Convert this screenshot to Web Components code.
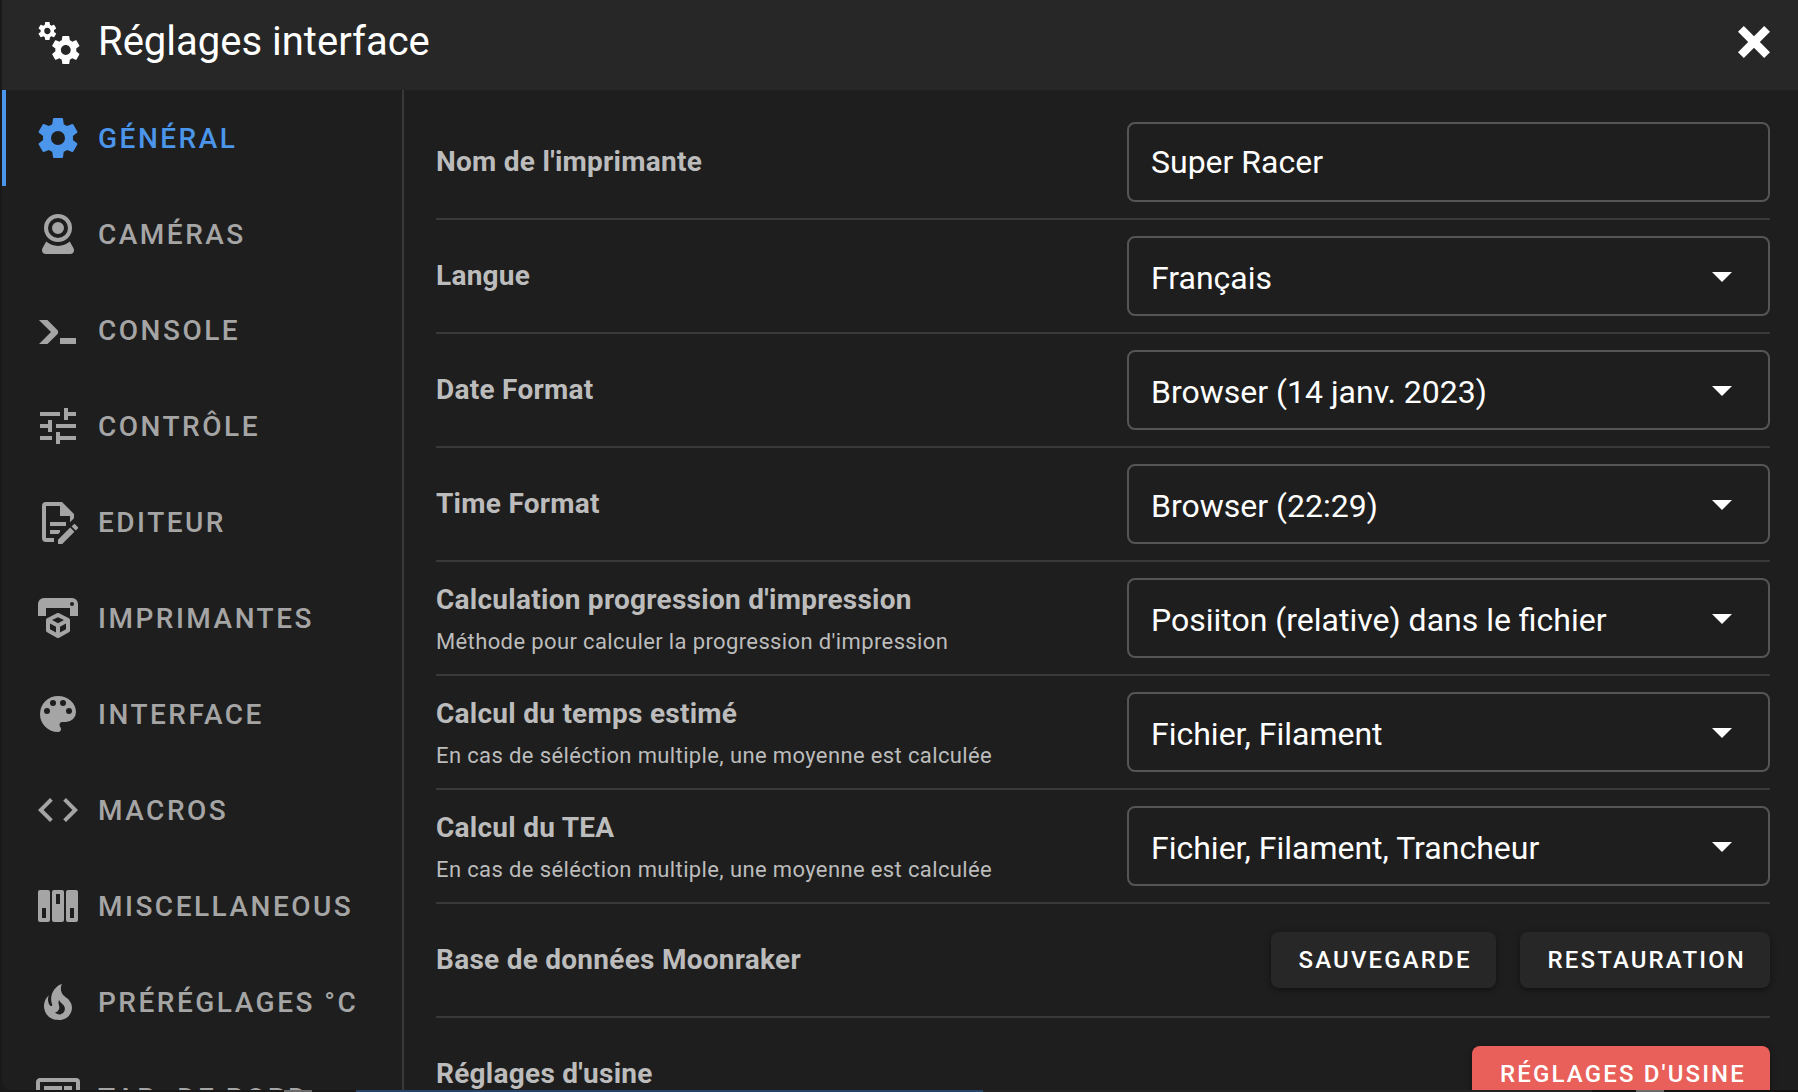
<!DOCTYPE html>
<html lang="fr">
<head>
<meta charset="utf-8">
<meta name="viewport" content="width=device-width, initial-scale=1">
<title>Réglages interface</title>
<style>
  html, body { margin: 0; height: 100%; overflow: hidden; }
  body {
    --surface: #1e1e1e;
    --raised: #272727;
    --line: #393939;
    --outline: #555;
    --primary: #4b95eb;
    --error: #e95f5a;
    --muted: #bcbcbc;
    --inactive: #a5a5a5;
    background: #191919;
    color: #fff;
    font-family: Roboto, "Liberation Sans", sans-serif;
  }
</style>
</head>
<body>
<settings-dialog heading="Réglages interface">
  <nav-tab slot="nav" icon="cog" active>Général</nav-tab>
  <nav-tab slot="nav" icon="webcam">Caméras</nav-tab>
  <nav-tab slot="nav" icon="console">Console</nav-tab>
  <nav-tab slot="nav" icon="tune">Contrôle</nav-tab>
  <nav-tab slot="nav" icon="edit">Editeur</nav-tab>
  <nav-tab slot="nav" icon="printer">Imprimantes</nav-tab>
  <nav-tab slot="nav" icon="palette">Interface</nav-tab>
  <nav-tab slot="nav" icon="code">Macros</nav-tab>
  <nav-tab slot="nav" icon="dip">Miscellaneous</nav-tab>
  <nav-tab slot="nav" icon="fire">Préréglages °C</nav-tab>
  <nav-tab slot="nav" icon="dashboard">Tab. de bord</nav-tab>

  <setting-row kind="text" label="Nom de l'imprimante" value="Super Racer"></setting-row>
  <setting-row kind="select" label="Langue" value="Français"></setting-row>
  <setting-row kind="select" label="Date Format" value="Browser (14 janv. 2023)"></setting-row>
  <setting-row kind="select" label="Time Format" value="Browser (22:29)"></setting-row>
  <setting-row kind="select" label="Calculation progression d'impression" hint="Méthode pour calculer la progression d'impression" value="Posiiton (relative) dans le fichier"></setting-row>
  <setting-row kind="select" label="Calcul du temps estimé" hint="En cas de séléction multiple, une moyenne est calculée" value="Fichier, Filament"></setting-row>
  <setting-row kind="select" label="Calcul du TEA" hint="En cas de séléction multiple, une moyenne est calculée" value="Fichier, Filament, Trancheur"></setting-row>
  <setting-row label="Base de données Moonraker">
    <action-button>Sauvegarde</action-button>
    <action-button>Restauration</action-button>
  </setting-row>
  <setting-row label="Réglages d'usine">
    <action-button tone="error">Réglages d'usine</action-button>
  </setting-row>
</settings-dialog>

<script>
const ICONS = {
  cogs: 'M15.9,18.45C17.25,18.45 18.35,17.35 18.35,16C18.35,14.65 17.25,13.55 15.9,13.55C14.54,13.55 13.45,14.65 13.45,16C13.45,17.35 14.54,18.45 15.9,18.45M21.1,16.68L22.58,17.84C22.71,17.95 22.75,18.13 22.66,18.29L21.26,20.71C21.17,20.86 21,20.92 20.83,20.86L19.09,20.16C18.73,20.44 18.33,20.67 17.91,20.85L17.64,22.7C17.62,22.87 17.47,23 17.3,23H14.5C14.32,23 14.18,22.87 14.15,22.7L13.89,20.85C13.46,20.67 13.07,20.44 12.71,20.16L10.96,20.86C10.81,20.92 10.62,20.86 10.54,20.71L9.14,18.29C9.05,18.13 9.09,17.95 9.22,17.84L10.7,16.68L10.65,16L10.7,15.31L9.22,14.16C9.09,14.05 9.05,13.86 9.14,13.71L10.54,11.29C10.62,11.13 10.81,11.07 10.96,11.13L12.71,11.84C13.07,11.56 13.46,11.32 13.89,11.15L14.15,9.29C14.18,9.13 14.32,9 14.5,9H17.3C17.47,9 17.62,9.13 17.64,9.29L17.91,11.15C18.33,11.32 18.73,11.56 19.09,11.84L20.83,11.13C21,11.07 21.17,11.13 21.26,11.29L22.66,13.71C22.75,13.86 22.71,14.05 22.58,14.16L21.1,15.31L21.15,16L21.1,16.68M6.69,8.07C7.56,8.07 8.26,7.37 8.26,6.5C8.26,5.63 7.56,4.92 6.69,4.92A1.58,1.58 0 0,0 5.11,6.5C5.11,7.37 5.82,8.07 6.69,8.07M10.03,6.94L11,7.68C11.07,7.75 11.09,7.87 11.03,7.97L10.13,9.53C10.08,9.63 9.96,9.67 9.86,9.63L8.74,9.18L8,9.62L7.81,10.81C7.79,10.92 7.7,11 7.59,11H5.79C5.67,11 5.58,10.92 5.56,10.81L5.4,9.62L4.64,9.18L3.52,9.63C3.41,9.67 3.3,9.63 3.24,9.53L2.34,7.97C2.28,7.87 2.31,7.75 2.39,7.68L3.34,6.94L3.31,6.5L3.34,6.06L2.39,5.32C2.31,5.25 2.28,5.13 2.34,5.03L3.24,3.47C3.3,3.37 3.41,3.33 3.52,3.37L4.63,3.82L5.4,3.38L5.56,2.19C5.58,2.08 5.67,2 5.79,2H7.59C7.7,2 7.79,2.08 7.81,2.19L8,3.38L8.74,3.82L9.86,3.37C9.96,3.33 10.08,3.37 10.13,3.47L11.03,5.03C11.09,5.13 11.07,5.25 11,5.32L10.03,6.06L10.06,6.5L10.03,6.94Z',
  close: 'M20 6.91L17.09 4L12 9.09L6.91 4L4 6.91L9.09 12L4 17.09L6.91 20L12 14.91L17.09 20L20 17.09L14.91 12L20 6.91Z',
  cog: 'M12,15.5A3.5,3.5 0 0,1 8.5,12A3.5,3.5 0 0,1 12,8.5A3.5,3.5 0 0,1 15.5,12A3.5,3.5 0 0,1 12,15.5M19.43,12.97C19.47,12.65 19.5,12.33 19.5,12C19.5,11.67 19.47,11.34 19.43,11L21.54,9.37C21.73,9.22 21.78,8.95 21.66,8.73L19.66,5.27C19.54,5.05 19.27,4.96 19.05,5.05L16.56,6.05C16.04,5.66 15.5,5.32 14.87,5.07L14.5,2.42C14.46,2.18 14.25,2 14,2H10C9.75,2 9.54,2.18 9.5,2.42L9.13,5.07C8.5,5.32 7.96,5.66 7.44,6.05L4.95,5.05C4.73,4.96 4.46,5.05 4.34,5.27L2.34,8.73C2.21,8.95 2.27,9.22 2.46,9.37L4.57,11C4.53,11.34 4.5,11.67 4.5,12C4.5,12.33 4.53,12.65 4.57,12.97L2.46,14.63C2.27,14.78 2.21,15.05 2.34,15.27L4.34,18.73C4.46,18.95 4.73,19.03 4.95,18.95L7.44,17.94C7.96,18.34 8.5,18.68 9.13,18.93L9.5,21.58C9.54,21.82 9.75,22 10,22H14C14.25,22 14.46,21.82 14.5,21.58L14.87,18.93C15.5,18.67 16.04,18.34 16.56,17.94L19.05,18.95C19.27,19.03 19.54,18.95 19.66,18.73L21.66,15.27C21.78,15.05 21.73,14.78 21.54,14.63L19.43,12.97Z',
  webcam: 'M12,2A7,7 0 0,1 19,9A7,7 0 0,1 12,16A7,7 0 0,1 5,9A7,7 0 0,1 12,2M12,4A5,5 0 0,0 7,9A5,5 0 0,0 12,14A5,5 0 0,0 17,9A5,5 0 0,0 12,4M12,6A3,3 0 0,1 15,9A3,3 0 0,1 12,12A3,3 0 0,1 9,9A3,3 0 0,1 12,6M6,22A2,2 0 0,1 4,20C4,19.62 4.1,19.27 4.29,18.97L6.11,15.81C7.69,17.17 9.75,18 12,18C14.25,18 16.31,17.17 17.89,15.81L19.71,18.97C19.9,19.27 20,19.62 20,20A2,2 0 0,1 18,22H6Z',
  console: 'M13,19V16H21V19H13M8.5,13L2.47,7H6.71L11.67,11.95C12.25,12.54 12.25,13.5 11.67,14.07L6.74,19H2.5L8.5,13Z',
  tune: 'M3,17V19H9V17H3M3,5V7H13V5H3M13,21V19H21V17H13V15H11V21H13M7,9V11H3V13H7V15H9V9H7M21,13V11H11V13H21M15,9H17V7H21V5H17V3H15V9Z',
  edit: 'M8,12H16V14H8V12M10,20H6V4H13V9H18V12.1L20,10.1V8L14,2H6A2,2 0 0,0 4,4V20A2,2 0 0,0 6,22H10V20M8,18H12.1L13,17.1V16H8V18M20.2,13C20.3,13 20.5,13.1 20.6,13.2L21.9,14.5C22.1,14.7 22.1,15.1 21.9,15.3L20.9,16.3L18.8,14.2L19.8,13.2C19.9,13.1 20,13 20.2,13M20.2,16.9L14.1,23H12V20.9L18.1,14.8L20.2,16.9Z',
  printer: 'M19,6A1,1 0 0,0 20,5A1,1 0 0,0 19,4A1,1 0 0,0 18,5A1,1 0 0,0 19,6M19,2A3,3 0 0,1 22,5V11H18V7H6V11H2V5A3,3 0 0,1 5,2H19M18,18.25C18,18.63 17.79,18.96 17.47,19.13L12.57,21.82C12.4,21.94 12.21,22 12,22C11.79,22 11.59,21.94 11.43,21.82L6.53,19.13C6.21,18.96 6,18.63 6,18.25V13C6,12.62 6.21,12.29 6.53,12.12L11.43,9.68C11.59,9.56 11.79,9.5 12,9.5C12.21,9.5 12.4,9.56 12.57,9.68L17.47,12.12C17.79,12.29 18,12.62 18,13V18.25M12,11.65L9.04,13L12,14.6L14.96,13L12,11.65M8,17.66L11,19.29V16.33L8,14.71V17.66M16,17.66V14.71L13,16.33V19.29L16,17.66Z',
  palette: 'M17.5,12A1.5,1.5 0 0,1 16,10.5A1.5,1.5 0 0,1 17.5,9A1.5,1.5 0 0,1 19,10.5A1.5,1.5 0 0,1 17.5,12M14.5,8A1.5,1.5 0 0,1 13,6.5A1.5,1.5 0 0,1 14.5,5A1.5,1.5 0 0,1 16,6.5A1.5,1.5 0 0,1 14.5,8M9.5,8A1.5,1.5 0 0,1 8,6.5A1.5,1.5 0 0,1 9.5,5A1.5,1.5 0 0,1 11,6.5A1.5,1.5 0 0,1 9.5,8M6.5,12A1.5,1.5 0 0,1 5,10.5A1.5,1.5 0 0,1 6.5,9A1.5,1.5 0 0,1 8,10.5A1.5,1.5 0 0,1 6.5,12M12,3A9,9 0 0,0 3,12A9,9 0 0,0 12,21A1.5,1.5 0 0,0 13.5,19.5C13.5,19.11 13.35,18.76 13.11,18.5C12.88,18.23 12.73,17.88 12.73,17.5A1.5,1.5 0 0,1 14.23,16H16A5,5 0 0,0 21,11C21,6.58 16.97,3 12,3Z',
  code: 'M14.6,16.6L19.2,12L14.6,7.4L16,6L22,12L16,18L14.6,16.6M9.4,16.6L4.8,12L9.4,7.4L8,6L2,12L8,18L9.4,16.6Z',
  dip: 'M3,4H7A1,1 0 0,1 8,5V19A1,1 0 0,1 7,20H3A1,1 0 0,1 2,19V5A1,1 0 0,1 3,4M4,13V18H6V13H4M10,4H14A1,1 0 0,1 15,5V19A1,1 0 0,1 14,20H10A1,1 0 0,1 9,19V5A1,1 0 0,1 10,4M11,6V11H13V6H11M17,4H21A1,1 0 0,1 22,5V19A1,1 0 0,1 21,20H17A1,1 0 0,1 16,19V5A1,1 0 0,1 17,4M18,13V18H20V13H18Z',
  fire: 'M17.66 11.2C17.43 10.9 17.15 10.64 16.89 10.38C16.22 9.78 15.46 9.35 14.82 8.72C13.33 7.26 13 4.85 13.95 3C13 3.23 12.17 3.75 11.46 4.32C8.87 6.4 7.85 10.07 9.07 13.22C9.11 13.32 9.15 13.42 9.15 13.55C9.15 13.77 9 13.97 8.8 14.05C8.57 14.15 8.33 14.09 8.14 13.93C8.08 13.88 8.04 13.83 8 13.76C6.87 12.33 6.69 10.28 7.45 8.64C5.78 10 4.87 12.3 5 14.47C5.06 14.97 5.12 15.47 5.29 15.97C5.43 16.57 5.7 17.17 6 17.7C7.08 19.43 8.95 20.67 10.96 20.92C13.1 21.19 15.39 20.8 17.03 19.32C18.86 17.66 19.5 15 18.56 12.72L18.43 12.46C18.22 12 17.66 11.2 17.66 11.2M14.5 17.5C14.22 17.74 13.76 18 13.4 18.1C12.28 18.5 11.16 17.94 10.5 17.28C11.69 17 12.4 16.12 12.61 15.23C12.78 14.43 12.46 13.77 12.33 13C12.21 12.26 12.23 11.63 12.5 10.94C12.69 11.32 12.89 11.7 13.13 12C13.9 13 15.11 13.44 15.37 14.8C15.41 14.94 15.43 15.08 15.43 15.23C15.46 16.05 15.1 16.95 14.5 17.5H14.5Z',
  dashboard: 'M21,16V4H3V16H21M21,2A2,2 0 0,1 23,4V16A2,2 0 0,1 21,18H14V20H16V22H8V20H10V18H3C1.89,18 1,17.1 1,16V4C1,2.89 1.89,2 3,2H21M5,6H14V11H5V6M15,6H19V8H15V6M19,9V14H15V9H19M5,12H9V14H5V12M10,12H14V14H10V12Z',
  down: 'M7,10L12,15L17,10H7Z'
};

class MdIcon extends HTMLElement {
  connectedCallback() {
    if (this.shadowRoot) return;
    this.attachShadow({ mode: 'open' }).innerHTML = `
      <style>
        :host { display: block; flex: none; width: 48px; height: 48px; }
        svg { display: block; width: 100%; height: 100%; fill: currentColor; }
      </style>
      <svg viewBox="0 0 24 24" aria-hidden="true"><path fill-rule="evenodd" d="${ICONS[this.getAttribute('name')]}"/></svg>`;
  }
}

class NavTab extends HTMLElement {
  connectedCallback() {
    if (this.shadowRoot) return;
    this.attachShadow({ mode: 'open' }).innerHTML = `
      <style>
        :host { display: block; flex: none; color: var(--inactive); }
        :host([active]) { color: var(--primary); }
        button {
          display: flex; align-items: center; gap: 16px;
          box-sizing: border-box; width: 100%; height: 96px; margin: 0; padding: 0 28px;
          border: 0; border-left: 4px solid transparent; background: none; color: inherit;
          font: 500 28px/32px Roboto, "Liberation Sans", sans-serif;
          letter-spacing: .0892857em; text-transform: uppercase; white-space: nowrap; cursor: pointer;
        }
        span { padding-top: 2px; }
        :host([active]) button { border-left-color: currentColor; }
      </style>
      <button type="button" role="tab" aria-selected="${this.hasAttribute('active')}">
        <md-icon name="${this.getAttribute('icon')}"></md-icon><span><slot></slot></span>
      </button>`;
  }
}

class ActionButton extends HTMLElement {
  connectedCallback() {
    if (this.shadowRoot) return;
    this.attachShadow({ mode: 'open' }).innerHTML = `
      <style>
        :host { display: block; }
        button {
          display: block; height: 56px; margin: 0; padding: 0 24px 0 28px; border: 0; border-radius: 8px;
          background: var(--raised); color: #fff; cursor: pointer;
          font: 500 24px/32px Roboto, "Liberation Sans", sans-serif;
          letter-spacing: .0892857em; text-transform: uppercase; white-space: nowrap;
          box-shadow: 0 2px 4px rgba(0,0,0,.3), 0 2px 8px rgba(0,0,0,.14);
        }
        :host([tone="error"]) button { background: var(--error); }
      </style>
      <button type="button"><slot></slot></button>`;
  }
}

class SettingRow extends HTMLElement {
  connectedCallback() {
    if (this.shadowRoot) return;
    const kind = this.getAttribute('kind');
    const label = this.getAttribute('label');
    const hint = this.getAttribute('hint');
    const value = this.getAttribute('value');
    let control = '<div class="actions"><slot></slot></div>';
    if (kind === 'text') {
      control = `<div class="field"><input id="control" type="text" value="${value}"></div>`;
    } else if (kind === 'select') {
      control = `<div class="field"><select id="control"><option>${value}</option></select><md-icon name="down"></md-icon></div>`;
    }
    const title = kind ? `<label for="control">${label}</label>` : `<span class="title">${label}</span>`;
    this.attachShadow({ mode: 'open' }).innerHTML = `
      <style>
        :host { display: grid; grid-template-columns: 1fr 1fr; align-items: center; min-height: 80px; padding: 16px 0; border-bottom: 2px solid var(--line); }
        :host(:last-of-type) { border-bottom: 0; }
        .text { display: flex; flex-direction: column; gap: 10px; color: var(--muted); }
        :host([hint]) .text { padding-top: 2px; }
        label, .title { font-size: 28px; line-height: 36px; font-weight: 700; letter-spacing: .009375em; white-space: nowrap; }
        .hint { font-size: 22px; line-height: 28px; letter-spacing: .017em; white-space: nowrap; }
        .field { display: grid; align-items: center; margin-left: 24px; }
        .field > * { grid-area: 1 / 1; }
        input, select {
          box-sizing: border-box; width: 100%; height: 80px; margin: 0; padding: 0 22px;
          border: 2px solid var(--outline); border-radius: 8px; outline: 0;
          background: transparent; color: #fff; appearance: none;
          font: 400 32px/40px Roboto, "Liberation Sans", sans-serif;
        }
        select { padding-top: 4px; }
        option { background: #1e1e1e; }
        md-icon { justify-self: end; margin-right: 24px; pointer-events: none; }
        .actions { display: flex; justify-content: flex-end; gap: 24px; }
      </style>
      <div class="text">${title}${hint ? `<span class="hint">${hint}</span>` : ''}</div>
      ${control}`;
  }
}

class SettingsDialog extends HTMLElement {
  connectedCallback() {
    if (this.shadowRoot) return;
    this.attachShadow({ mode: 'open' }).innerHTML = `
      <style>
        :host {
          display: flex; flex-direction: column; box-sizing: border-box; height: 100vh; padding: 0 0 2px 2px;
          /* sliver of the dimmed dashboard that shows under the dialog */
          background: linear-gradient(90deg, #191919 284px, #6b6b6b 284px 312px, #191919 312px 356px, #284468 356px 983px, #222 983px 1592px, #121212 1592px 1636px, #6b6b6b 1636px 1664px, #121212 1664px) bottom / 100% 2px no-repeat;
        }
        section { display: flex; flex-direction: column; flex: 1; min-height: 0; overflow: hidden; border-radius: 0 0 0 8px; background: var(--surface); }
        header { display: flex; align-items: center; gap: 16px; flex: none; height: 90px; box-sizing: border-box; padding: 0 20px 6px 32px; background: var(--raised); }
        h1 { flex: 1; margin: 0; font-size: 40px; line-height: 48px; font-weight: 400; }
        .close { display: block; margin: 0; padding: 0; border: 0; background: none; color: #fff; cursor: pointer; }
        .body { display: flex; flex: 1; min-height: 0; }
        nav { display: flex; flex-direction: column; flex: none; width: 400px; overflow: hidden; border-right: 2px solid var(--line); }
        main { flex: 1; min-width: 0; overflow: hidden; padding: 16px 28px 0 32px; }
      </style>
      <section role="dialog" aria-labelledby="heading">
        <header>
          <md-icon name="cogs"></md-icon>
          <h1 id="heading">${this.getAttribute('heading')}</h1>
          <button class="close" type="button" aria-label="Fermer"><md-icon name="close"></md-icon></button>
        </header>
        <div class="body">
          <nav role="tablist"><slot name="nav"></slot></nav>
          <main><slot></slot></main>
        </div>
      </section>`;
  }
}

customElements.define('md-icon', MdIcon);
customElements.define('nav-tab', NavTab);
customElements.define('action-button', ActionButton);
customElements.define('setting-row', SettingRow);
customElements.define('settings-dialog', SettingsDialog);
</script>
</body>
</html>
